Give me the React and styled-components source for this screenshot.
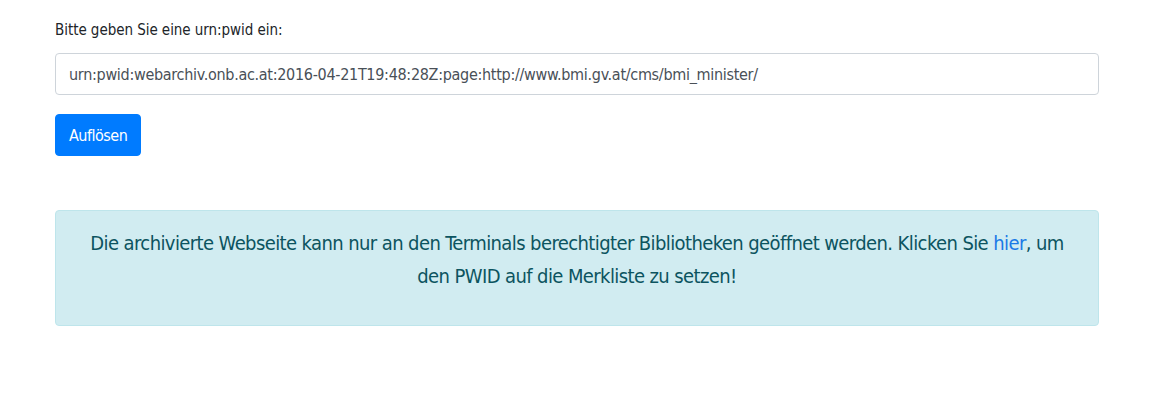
import React from "react";
import styled, { createGlobalStyle } from "styled-components";

const GlobalStyle = createGlobalStyle`
  body {
    margin: 0;
    background: #fff;
    font-family: "DejaVu Sans Condensed", "Liberation Sans Narrow", "Liberation Sans", sans-serif;
    color: #212529;
  }
`;

const Page = styled.div`
  width: 1044px;
  padding: 18px 0 0 55px;
`;

const Label = styled.label`
  display: block;
  font-size: 15px;
  line-height: 24px;
  letter-spacing: -0.05px;
  margin-bottom: 11px;
`;

const Input = styled.input`
  display: block;
  box-sizing: border-box;
  width: 100%;
  height: 42px;
  padding: 0 13px;
  font-family: inherit;
  font-size: 16px;
  letter-spacing: -0.3px;
  color: #495057;
  background: #fff;
  border: 1px solid #ced4da;
  border-radius: 4px;
  outline: none;
`;

const Button = styled.button`
  display: block;
  margin-top: 19px;
  height: 42px;
  padding: 0 13px;
  font-family: inherit;
  font-size: 16px;
  letter-spacing: -0.5px;
  color: #fff;
  background: #007bff;
  border: 1px solid #007bff;
  border-radius: 4px;
`;

const Alert = styled.div`
  margin-top: 54px;
  box-sizing: border-box;
  padding: 16px 20px;
  background: #d1ecf1;
  border: 1px solid #bee5eb;
  border-radius: 4px;
  color: #0c5460;
  text-align: center;
`;

const Message = styled.p`
  margin: 0 0 16px;
  font-size: 20px;
  line-height: 33px;
  letter-spacing: -0.6px;
`;

const Link = styled.a`
  color: #1a7ae6;
  text-decoration: none;
`;

const App = () => {
  return (
    <Page>
      <GlobalStyle />
      <Label htmlFor="pwid">Bitte geben Sie eine urn:pwid ein:</Label>
      <Input
        id="pwid"
        defaultValue="urn:pwid:webarchiv.onb.ac.at:2016-04-21T19:48:28Z:page:http://www.bmi.gv.at/cms/bmi_minister/"
      />
      <Button>Auflösen</Button>
      <Alert>
        <Message>
          Die archivierte Webseite kann nur an den Terminals berechtigter
          Bibliotheken geöffnet werden. Klicken Sie <Link href="#">hier</Link>,
          um den PWID auf die Merkliste zu setzen!
        </Message>
      </Alert>
    </Page>
  );
};

export default App;
